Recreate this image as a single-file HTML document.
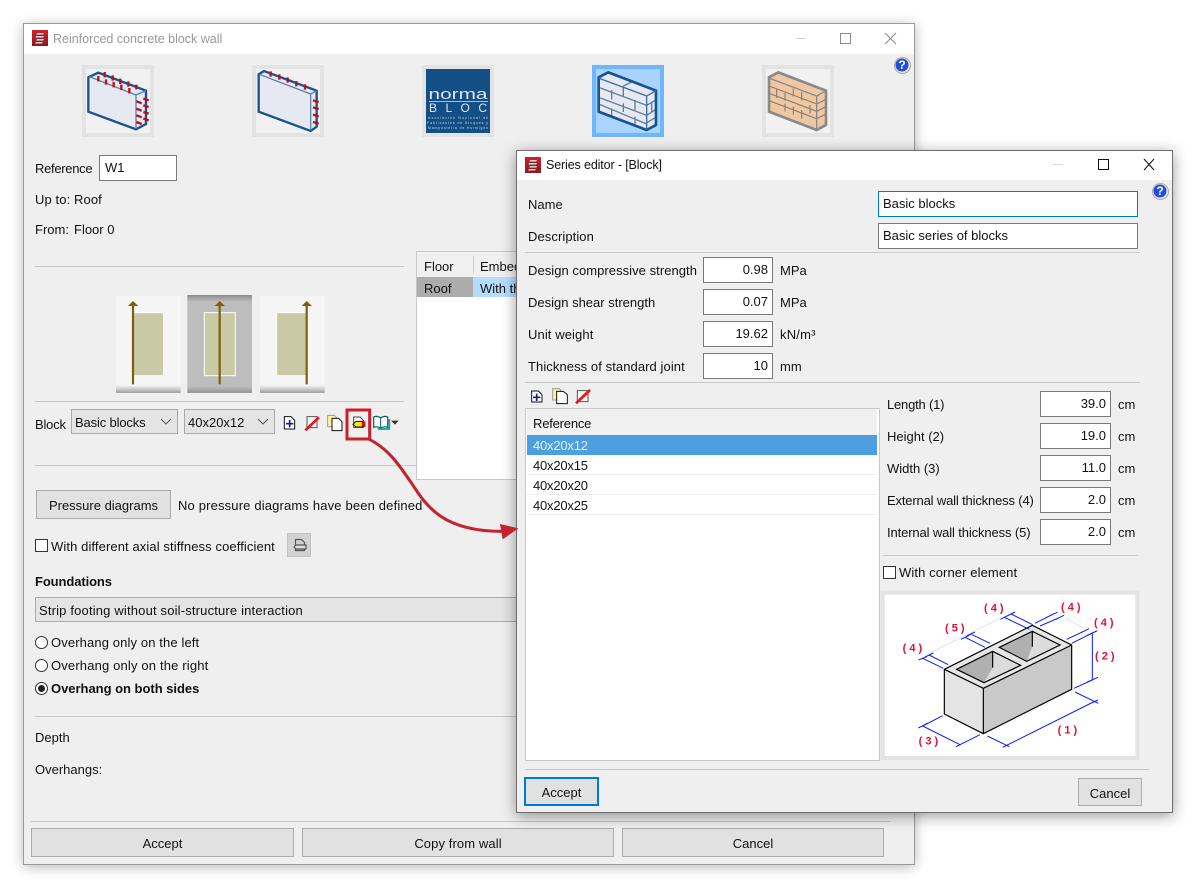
<!DOCTYPE html>
<html><head><meta charset="utf-8"><style>
html,body{margin:0;padding:0;background:#fff;width:1197px;height:885px;overflow:hidden}
*{box-sizing:border-box}
body{font-family:"Liberation Sans",sans-serif;font-size:13px;color:#111;position:relative}
.w{position:absolute;background:#efefef}
.t{position:absolute;line-height:16px;white-space:nowrap;margin-top:1px}
.i{position:absolute;background:#fff;border:1px solid #7a7a7a;line-height:24px;padding:0 5px;white-space:nowrap}
.n{text-align:right;padding:0 4px}
.l{position:absolute;height:1px;background:#c8c8c8}
.b{position:absolute;background:#e1e1e1;border:1px solid #adadad;text-align:center;line-height:29px}
.s{position:absolute}
.sel{position:absolute;background:#e4e4e4;border:1px solid #a8a8a8;line-height:25px;padding-left:3px;white-space:nowrap}
.sel svg{position:absolute;right:5px;top:8px}
</style></head><body>

<!-- main window -->
<div class="w" style="left:23px;top:23px;width:892px;height:842px;border:1px solid #9a9a9a;box-shadow:0 2px 12px rgba(0,0,0,.28)"></div>
<div class="s" style="left:24px;top:24px;width:890px;height:30px;background:#fff"></div>
<svg class="s" style="left:32px;top:30px" width="16" height="16" viewBox="0 0 16 16"><defs><linearGradient id="r" x1="0" y1="0" x2="0" y2="1"><stop offset="0" stop-color="#d0202c"/><stop offset="1" stop-color="#8e1722"/></linearGradient></defs><rect width="16" height="16" fill="url(#r)"/><path d="M5 3h7l-1 2H4zM4 6h8l-1 2H3zM5 9h7l-1 2H4zM4 12h7l-1 1.500H3z" fill="#d8d0d0"/><path d="M3 5h9M3 8h9M4 11h7" stroke="#5a2a2a" stroke-width=".7"/></svg>
<div class="t" style="left:53px;top:30px;color:#999;letter-spacing:-.01px;font-size:12.500px">Reinforced concrete block wall</div>
<svg class="s" style="left:790px;top:30px" width="110" height="16"><path d="M5 8.500h11" stroke="#d4d4d4"/><rect x="50.500" y="3.500" width="10" height="10" fill="none" stroke="#8a8a8a"/><path d="M95 3l11 11M106 3L95 14" stroke="#8a8a8a" fill="none"/></svg>

<!-- wall tile 1 -->
<svg class="s" style="left:82px;top:65px" width="72" height="72" viewBox="186 135 216 216"><rect x="186" y="135" width="216" height="216" fill="#e3e3e3"/><rect x="198" y="147" width="192" height="192" fill="#f1f1f1"/><path d="M205 172L235 158L378 212V312L348 328L205 275Z" fill="#e6e8f2" stroke="#17548f" stroke-width="7"/><path d="M208 170L348 225L378 212M348 225V326" fill="none" stroke="#5d86ad" stroke-width="4"/><path d="M235 168v16M254 156v16M258 178v16M278 166v16M281 186v16M301 176v16M304 194v16M325 184v16M328 204v16M349 194v14M349 244l16 6M349 266l16 6M349 286l16 6M349 306l16 6M370 236l16 5M370 256l16 5M370 276l16 5M370 296l16 5" stroke="#c40d12" stroke-width="7" fill="none"/></svg>
<!-- wall tile 2 -->
<svg class="s" style="left:252px;top:65px" width="72" height="72" viewBox="696 135 216 216"><rect x="696" y="135" width="216" height="216" fill="#e3e3e3"/><rect x="708" y="147" width="192" height="192" fill="#f1f1f1"/><path d="M716 163L732 153L890 212V320L872 333L716 275Z" fill="#e6e8f2" stroke="#17548f" stroke-width="7"/><path d="M718 163L872 222L890 212M872 222V331" fill="none" stroke="#5d86ad" stroke-width="4"/><path d="M752 154v16M778 163v16M803 172v16M829 183v16M855 193v16M879 241l17 5M879 262l17 5M879 284l17 5M879 306l17 5" stroke="#c40d12" stroke-width="7" fill="none"/></svg>
<!-- norma bloc -->
<div class="s" style="left:422px;top:65px;width:72px;height:72px;background:#e3e3e3"></div>
<svg class="s" style="left:426px;top:69px" width="64" height="64" viewBox="0 0 64 64" font-family="Liberation Sans" fill="#dbe6ef">
<rect width="64" height="64" fill="#134f85"/>
<text x="2.500" y="30" font-size="15" textLength="59" lengthAdjust="spacingAndGlyphs">norma</text>
<rect x="3" y="32" width="59" height="1" fill="#a8c0d4"/>
<text x="3" y="43" font-size="12" textLength="58" lengthAdjust="spacing">BLOC</text>
<g font-size="3.500" fill="#c4d4e2"><text x="2" y="50" textLength="60">Asociación Nacional de</text><text x="1" y="55" textLength="61">Fabricantes de Bloques y</text><text x="2" y="60" textLength="60">Mampostería de Hormigón</text></g>
</svg>
<!-- brick tile blue -->
<svg class="s" style="left:592px;top:65px" width="72" height="72" viewBox="216 45 216 216"><rect x="216" y="45" width="216" height="216" fill="#70b5ff"/><rect x="228" y="57" width="192" height="192" fill="#a9d4ff"/><path d="M236 82L265 67L408 122V225L380 240L236 185Z" fill="#e6e8f2"/><path d="M236 112L380 166M236 142L380 196M236 162L380 222M380 166L408 150M380 196L408 178M380 218L408 202M275 120v28M310 110v30M345 150v30M310 160v26M275 175v25M345 200v28M310 108L335 96M395 155v30" stroke="#5f7f9f" stroke-width="4" fill="none"/><path d="M236 82L265 67L408 122V225L380 240L236 185Z" fill="none" stroke="#17548f" stroke-width="8"/><path d="M238 85L380 138L408 122M380 138V238" fill="none" stroke="#3f6f9f" stroke-width="4"/></svg>
<!-- brick tile orange -->
<svg class="s" style="left:762px;top:65px" width="72" height="72" viewBox="726 45 216 216"><rect x="726" y="45" width="216" height="216" fill="#e3e3e3"/><rect x="738" y="57" width="192" height="192" fill="#f1f1f1"/><path d="M747 82L775 67L918 122V225L890 240L747 185Z" fill="#eec7a3"/><path d="M747 108L890 162M747 130L890 184M747 152L890 206M890 162L918 148M890 184L918 170M890 206L918 192M770 118v26M795 128v24M820 116v24M845 126v26M795 160v24M820 170v24M845 180v26M870 165v26" stroke="#8f7f70" stroke-width="3.500" fill="none"/><path d="M747 82L775 67L918 122V225L890 240L747 185Z" fill="none" stroke="#8a8a8a" stroke-width="8"/><path d="M749 85L890 138L918 122M890 138V238" fill="none" stroke="#8a8a8a" stroke-width="4"/></svg>
<!-- help -->
<svg class="s" style="left:894px;top:57px" width="17" height="17"><circle cx="8.500" cy="8.500" r="8" fill="#e8e8e8" stroke="#aaa"/><circle cx="8" cy="8" r="6.500" fill="#1f4fd8"/><text x="8" y="12" font-size="12" font-weight="bold" fill="#fff" text-anchor="middle" font-family="Liberation Sans">?</text></svg>

<div class="t" style="left:35px;top:160px;letter-spacing:-.3px">Reference</div>
<div class="i" style="left:99px;top:155px;width:78px;height:26px">W1</div>
<div class="t" style="left:35px;top:191px;letter-spacing:.1px">Up to: Roof</div>
<div class="t" style="left:35px;top:221px">From:</div>
<div class="t" style="left:74px;top:221px">Floor 0</div>
<div class="l" style="left:35px;top:266px;width:369px"></div>

<!-- table -->
<div class="l" style="left:35px;top:465px;width:381px"></div>
<div class="s" style="left:416px;top:251px;width:110px;height:229px;background:#fff;border:1px solid #c8c8c8"></div>
<div class="s" style="left:417px;top:252px;width:110px;height:25px;background:#f0f0f0"></div>
<div class="s" style="left:473px;top:256px;width:1px;height:18px;background:#ccc"></div>
<div class="t" style="left:424px;top:258px">Floor</div>
<div class="t" style="left:480px;top:258px">Embed</div>
<div class="s" style="left:417px;top:277px;width:56px;height:20px;background:#acacac"></div>
<div class="s" style="left:473px;top:277px;width:50px;height:20px;background:#b5dcff"></div>
<div class="t" style="left:424px;top:280px">Roof</div>
<div class="t" style="left:480px;top:280px">With th</div>

<!-- alignment buttons -->
<svg class="s" style="left:116px;top:295px" width="210" height="98" viewBox="0 0 630 294">
<defs><linearGradient id="g1" x1="0" y1="0" x2="0" y2="1"><stop offset=".92" stop-color="#f5f5f5"/><stop offset="1" stop-color="#a0a0a0"/></linearGradient><linearGradient id="g2" x1="0" y1="0" x2="0" y2="1"><stop offset="0" stop-color="#8c8c8c"/><stop offset=".07" stop-color="#bdbdbd"/><stop offset=".93" stop-color="#bdbdbd"/><stop offset="1" stop-color="#949494"/></linearGradient></defs>
<rect x="0" y="3" width="194" height="291" fill="url(#g1)"/><rect x="214" y="0" width="194" height="294" fill="url(#g2)"/><rect x="432" y="3" width="194" height="291" fill="url(#g1)"/>
<rect x="52" y="53" width="91" height="189" fill="#c9c9a5" stroke="#fff" stroke-width="3"/><rect x="265" y="53" width="93" height="189" fill="#c9c9a5" stroke="#fff" stroke-width="3"/><rect x="482" y="53" width="92" height="189" fill="#c9c9a5" stroke="#fff" stroke-width="3"/>
<path d="M51 268V30M311 268V30M572 268V30" stroke="#7c5f0a" stroke-width="6.500"/>
<path d="M36 33L51 18L67 33ZM296 33L311 18L327 33ZM557 33L572 18L588 33Z" fill="#7c5f0a"/></svg>
<div class="l" style="left:35px;top:401px;width:369px"></div>

<div class="t" style="left:35px;top:416px;letter-spacing:-.2px">Block</div>
<div class="sel" style="left:71px;top:409px;width:107px;height:25px;letter-spacing:-.15px">Basic blocks<svg width="12" height="7"><path d="M1 1l5 5 5-5" fill="none" stroke="#555"/></svg></div>
<div class="sel" style="left:184px;top:409px;width:91px;height:25px">40x20x12<svg width="12" height="7"><path d="M1 1l5 5 5-5" fill="none" stroke="#555"/></svg></div>
<!-- toolbar icons -->
<svg class="s" style="left:280px;top:408px" width="125" height="30" viewBox="0 0 375 90" fill="none">
<path d="M13 26h20l11 11v26H13z" fill="#fff" stroke="#111" stroke-width="3"/><path d="M29 36v22M18 47h22" stroke="#1a1a8c" stroke-width="5"/>
<path d="M81 26h30v33H81z" fill="#f6f6f6" stroke="#555" stroke-width="3"/><path d="M76 67L117 28" stroke="#e81414" stroke-width="8"/>
<path d="M143 22h20l6 6v28h-26z" fill="#fff59c" stroke="#999" stroke-width="3"/><path d="M156 31h20l10 10v27h-30z" fill="#fff" stroke="#111" stroke-width="3"/>
<path d="M221 27h19l10 10v21h-29z" fill="#fff" stroke="#444" stroke-width="3"/><path d="M219 49l9-9h20v17h-20z" fill="#ffe600" stroke="#111" stroke-width="3"/><rect x="246" y="41" width="10" height="15" fill="#e01010" stroke="#600" stroke-width="1"/>
<path d="M281 27q10-5 21 3 10-8 21-3v31q-11-4-21 2-10-6-21-2z" fill="#fff" stroke="#0a5c62" stroke-width="3.500"/><path d="M302 30v30" stroke="#0a5c62" stroke-width="3"/><path d="M323 36h5v27h-35" stroke="#12a0a0" stroke-width="5"/>
<path d="M333 38h23l-11 12z" fill="#333"/></svg>

<div class="l" style="left:35px;top:716px;width:482px"></div>
<div class="b" style="left:36px;top:490px;width:135px;height:29px;line-height:30px">Pressure diagrams</div>
<div class="t" style="left:178px;top:497px;letter-spacing:.16px">No pressure diagrams have been defined</div>

<div class="s" style="left:35px;top:539px;width:13px;height:13px;background:#fff;border:1px solid #333"></div>
<div class="t" style="left:51px;top:538px;letter-spacing:.1px">With different axial stiffness coefficient</div>
<div class="s" style="left:287px;top:533px;width:24px;height:24px;background:#d2d2d2;border:1px solid #c2c2c2"></div>
<svg class="s" style="left:292px;top:538px" width="16" height="16"><path d="M3.500 1.500h6l3 3v8h-9z" fill="none" stroke="#555" stroke-width="1.200"/><path d="M2 9l2-2h10v4H4z" fill="#ddd" stroke="#555" stroke-width="1.200"/></svg>
<div class="t" style="left:35px;top:573px;font-weight:bold;letter-spacing:-.1px">Foundations</div>
<div class="s" style="left:35px;top:597px;width:482px;height:25px;background:#e4e4e4;border:1px solid #ababab"></div>
<div class="t" style="left:39px;top:602px;letter-spacing:.17px">Strip footing without soil-structure interaction</div>
<svg class="s" style="left:34px;top:634px" width="16" height="62"><circle cx="7.500" cy="8.500" r="6" fill="#fff" stroke="#333"/><circle cx="7.500" cy="31.500" r="6" fill="#fff" stroke="#333"/><circle cx="7.500" cy="54.500" r="6" fill="#fff" stroke="#333"/><circle cx="7.500" cy="54.500" r="3.500" fill="#222"/></svg>
<div class="t" style="left:51px;top:634px;letter-spacing:.12px">Overhang only on the left</div>
<div class="t" style="left:51px;top:657px;letter-spacing:.16px">Overhang only on the right</div>
<div class="t" style="left:51px;top:680px;font-weight:bold;letter-spacing:-.02px">Overhang on both sides</div>
<div class="t" style="left:35px;top:729px">Depth</div>
<div class="t" style="left:35px;top:761px">Overhangs:</div>
<div class="l" style="left:31px;top:821px;width:860px"></div>
<div class="b" style="left:31px;top:828px;width:263px;height:29px">Accept</div>
<div class="b" style="left:302px;top:828px;width:312px;height:29px;letter-spacing:.1px">Copy from wall</div>
<div class="b" style="left:622px;top:828px;width:262px;height:29px">Cancel</div>

<!-- series window -->
<div class="w" style="left:516px;top:150px;width:657px;height:663px;border:1px solid #6f6f6f;box-shadow:0 3px 14px rgba(0,0,0,.4)"></div>
<div class="s" style="left:517px;top:151px;width:655px;height:29px;background:#fff"></div>
<svg class="s" style="left:525px;top:157px" width="16" height="16" viewBox="0 0 16 16"><rect width="16" height="16" fill="url(#r)"/><path d="M5 3h7l-1 2H4zM4 6h8l-1 2H3zM5 9h7l-1 2H4zM4 12h7l-1 1.500H3z" fill="#d8d0d0"/><path d="M3 5h9M3 8h9M4 11h7" stroke="#5a2a2a" stroke-width=".7"/></svg>
<div class="t" style="left:546px;top:156px;font-size:12.500px;letter-spacing:-.13px">Series editor - [Block]</div>
<svg class="s" style="left:1050px;top:156px" width="110" height="16"><path d="M3 8.500h10" stroke="#d4d4d4"/><rect x="48.500" y="3.500" width="10" height="10" fill="none" stroke="#111"/><path d="M94 3l10 11M104 3L94 14" stroke="#111" fill="none"/></svg>
<svg class="s" style="left:1152px;top:183px" width="17" height="17"><circle cx="8.500" cy="8.500" r="8" fill="#e8e8e8" stroke="#aaa"/><circle cx="8" cy="8" r="6.500" fill="#1f4fd8"/><text x="8" y="12" font-size="12" font-weight="bold" fill="#fff" text-anchor="middle" font-family="Liberation Sans">?</text></svg>

<div class="t" style="left:528px;top:196px">Name</div>
<div class="t" style="left:528px;top:228px;letter-spacing:.08px">Description</div>
<div class="i" style="left:878px;top:191px;width:260px;height:26px;border-color:#0078d7;padding-left:4px">Basic blocks</div>
<div class="i" style="left:878px;top:223px;width:260px;height:26px;padding-left:4px">Basic series of blocks</div>
<div class="l" style="left:525px;top:252px;width:615px"></div>

<div class="t" style="left:528px;top:262px;letter-spacing:.05px">Design compressive strength</div>
<div class="t" style="left:528px;top:294px">Design shear strength</div>
<div class="t" style="left:528px;top:326px;letter-spacing:.1px">Unit weight</div>
<div class="t" style="left:528px;top:358px;letter-spacing:.08px">Thickness of standard joint</div>
<div class="i n" style="left:703px;top:257px;width:70px;height:26px">0.98</div>
<div class="i n" style="left:703px;top:289px;width:70px;height:26px">0.07</div>
<div class="i n" style="left:703px;top:321px;width:70px;height:26px">19.62</div>
<div class="i n" style="left:703px;top:353px;width:70px;height:26px">10</div>
<div class="t" style="left:780px;top:262px">MPa</div>
<div class="t" style="left:780px;top:294px">MPa</div>
<div class="t" style="left:780px;top:326px;letter-spacing:.2px">kN/m³</div>
<div class="t" style="left:780px;top:358px">mm</div>
<div class="l" style="left:525px;top:382px;width:615px"></div>

<svg class="s" style="left:520px;top:380px" width="80" height="28" viewBox="0 0 240 84" fill="none">
<path d="M35 33h20l11 11v22H35z" fill="#fff" stroke="#111" stroke-width="3"/><path d="M50 41v22M39 52h22" stroke="#1a1a8c" stroke-width="5"/>
<path d="M98 26h20l6 6v28H98z" fill="#fff59c" stroke="#999" stroke-width="3"/><path d="M110 34h20l12 10v27h-32z" fill="#fff" stroke="#111" stroke-width="3"/>
<path d="M172 32h32v33h-32z" fill="#f6f6f6" stroke="#555" stroke-width="3"/><path d="M168 70L210 30" stroke="#e81414" stroke-width="8"/></svg>

<div class="s" style="left:525px;top:408px;width:355px;height:353px;background:#fff;border:1px solid #c8c8c8"></div>
<div class="s" style="left:527px;top:409px;width:350px;height:26px;background:#f0f0f0"></div>
<div class="t" style="left:533px;top:415px;letter-spacing:-.2px">Reference</div>
<div class="s" style="left:527px;top:435px;width:350px;height:20px;background:#4d9fe0"></div>
<div class="t" style="left:533px;top:437px;color:#e8f2fb;letter-spacing:-.2px">40x20x12</div>
<div class="l" style="left:527px;top:474px;width:350px;background:#eee"></div>
<div class="l" style="left:527px;top:494px;width:350px;background:#eee"></div>
<div class="l" style="left:527px;top:514px;width:350px;background:#eee"></div>
<div class="t" style="left:533px;top:457px;letter-spacing:-.2px">40x20x15</div>
<div class="t" style="left:533px;top:477px;letter-spacing:-.2px">40x20x20</div>
<div class="t" style="left:533px;top:497px;letter-spacing:-.2px">40x20x25</div>

<div class="t" style="left:887px;top:396px;letter-spacing:-.2px">Length (1)</div>
<div class="t" style="left:887px;top:428px">Height (2)</div>
<div class="t" style="left:887px;top:460px">Width (3)</div>
<div class="t" style="left:887px;top:492px;letter-spacing:-.16px">External wall thickness (4)</div>
<div class="t" style="left:887px;top:524px;letter-spacing:-.12px">Internal wall thickness (5)</div>
<div class="i n" style="left:1040px;top:391px;width:71px;height:26px">39.0</div>
<div class="i n" style="left:1040px;top:423px;width:71px;height:26px">19.0</div>
<div class="i n" style="left:1040px;top:455px;width:71px;height:26px">11.0</div>
<div class="i n" style="left:1040px;top:487px;width:71px;height:26px">2.0</div>
<div class="i n" style="left:1040px;top:519px;width:71px;height:26px">2.0</div>
<div class="t" style="left:1118px;top:396px">cm</div>
<div class="t" style="left:1118px;top:428px">cm</div>
<div class="t" style="left:1118px;top:460px">cm</div>
<div class="t" style="left:1118px;top:492px">cm</div>
<div class="t" style="left:1118px;top:524px">cm</div>
<div class="l" style="left:883px;top:555px;width:255px"></div>
<div class="s" style="left:883px;top:566px;width:13px;height:13px;background:#fff;border:1px solid #333"></div>
<div class="t" style="left:899px;top:564px;letter-spacing:.1px">With corner element</div>

<!-- block diagram -->
<svg class="s" style="left:880px;top:590px" width="260" height="170" viewBox="0 0 780 510" font-family="Liberation Sans" font-size="33" font-weight="bold" fill="#e0103a">
<rect x="8" y="8" width="764" height="496" fill="#fff" stroke="#e3e3e3" stroke-width="12"/>
<path d="M193 238L310 295V431L193 372Z" fill="#e4e4e4"/><path d="M310 295L575 165V298L310 431Z" fill="#c9c9c9"/><path d="M193 238L457 106L575 165L310 295Z" fill="#e6e6e6"/>
<path d="M230 238L338 184L422 226L312 278Z" fill="#dcdcdc"/><path d="M230 238L338 184V233L312 278Z" fill="#b0b0b0"/>
<path d="M358 172L457 124L540 165L440 214Z" fill="#dcdcdc"/><path d="M358 172L457 124V170L440 214Z" fill="#b0b0b0"/>
<g fill="none" stroke="#000" stroke-width="3.500"><path d="M193 238L457 106L575 165V298L310 431L193 372ZM193 238L310 295L575 165M310 295V431"/><path d="M230 238L338 184L422 226L312 278ZM338 184V233"/><path d="M358 172L457 124L540 165L440 214ZM457 124V170"/></g>
<g fill="none" stroke="#0a1ef0" stroke-width="3">
<path d="M128 408L240 464M115 414L142 400M228 470L252 458M128 408L188 377M240 464L300 434M380 466L640 336M368 472L392 460M628 342L654 330M322 438L388 470M585 306L655 340M637 128V270M622 136L652 122M622 276L654 262M582 295L637 270"/>
<path d="M128 205L190 235M147 195L205 224M116 210L140 200M135 201L160 189M255 142L315 172M272 132L330 160M243 148L268 136M260 138L285 126M373 82L448 118M393 72L458 104M361 88L385 76M381 78L405 66M465 100L520 72M480 108L540 82M508 78L532 67M528 88L552 76M560 148L615 122M575 160L635 130M603 128L627 116M623 136L648 124"/></g>
<path d="M148 190L360 85M555 85L612 114" stroke="#ddd" stroke-width="2.500" fill="none"/>
<text x="68" y="184">( 4 )</text><text x="195" y="124">( 5 )</text><text x="312" y="64">( 4 )</text><text x="543" y="61">( 4 )</text><text x="642" y="108">( 4 )</text><text x="645" y="208">( 2 )</text><text x="116" y="463">( 3 )</text><text x="533" y="430">( 1 )</text>
</svg>

<div class="l" style="left:525px;top:769px;width:624px"></div>
<div class="b" style="left:524px;top:777px;width:75px;height:29px;border:2px solid #0078d7;line-height:28px">Accept</div>
<div class="b" style="left:1078px;top:778px;width:64px;height:28px">Cancel</div>

<!-- red callout -->
<svg class="s" style="left:340px;top:400px" width="190" height="150" viewBox="0 0 570 450" fill="none">
<rect x="21" y="30" width="68" height="87" stroke="#c8202f" stroke-width="9"/>
<path d="M88 118C150 150 180 200 215 250C260 320 310 395 490 394" stroke="#c8202f" stroke-width="9"/>
<path d="M480 372L535 385L488 418Z" fill="#c8202f"/></svg>
</body></html>
